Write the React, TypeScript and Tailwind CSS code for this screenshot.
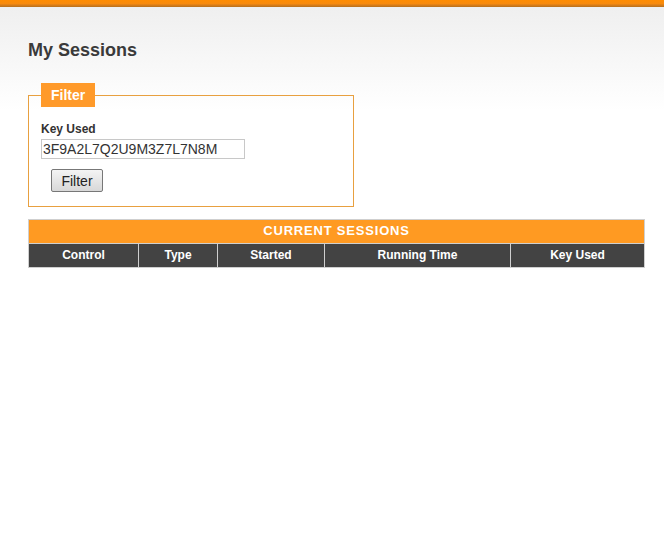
export default function App() {
  const columns = [
    { label: "Control", w: "w-[110px]" },
    { label: "Type", w: "w-[79px]" },
    { label: "Started", w: "w-[107px]" },
    { label: "Running Time", w: "w-[186px]" },
    { label: "Key Used", w: "" },
  ];

  return (
    <div className="min-h-[535px] bg-white font-['Liberation_Sans',Arial,sans-serif] text-[#333]">
      <div className="h-[7px] bg-gradient-to-b from-[#ff8c00] via-[#f88a0c] to-[#b8701c]" />
      <div className="bg-gradient-to-b from-[#efefef] to-white h-[104px] -mb-[104px]" />
      <div className="relative px-[28px] pt-[33px]">
        <h1 className="text-[18px] font-bold leading-[20px] text-[#3a3a3a]">My Sessions</h1>

        <fieldset className="mt-[23px] w-[326px] border border-[#e8a040] px-[12px] pb-[13px] pt-[15px]">
          <legend className="ml-[0px] bg-[#ff9a2a] px-[10px] py-[3px] text-[14px] font-bold leading-[18px] text-white">
            Filter
          </legend>
          <label className="block text-[12px] font-bold leading-[14px] text-[#333]">Key Used</label>
          <input
            defaultValue="3F9A2L7Q2U9M3Z7L7N8M"
            className="mt-[3px] block h-[20px] w-[204px] border border-[#c8c8c8] bg-white px-[1px] text-[14px] leading-[18px] text-[#333] outline-none"
          />
          <button className="ml-[10px] mt-[10px] h-[23px] w-[52px] rounded-[2px] border border-[#777] bg-gradient-to-b from-[#f4f4f4] to-[#d8d8d8] text-[14px] leading-[18px] text-[#222]">
            Filter
          </button>
        </fieldset>

        <table className="mt-[12px] w-[617px] border-collapse border border-[#cfcfcf]">
          <thead>
            <tr>
              <th
                colSpan={5}
                className="h-[24px] bg-[#ff9a22] p-0 text-[13px] font-bold tracking-[0.8px] text-white"
              >
                CURRENT SESSIONS
              </th>
            </tr>
            <tr>
              {columns.map((c) => (
                <th
                  key={c.label}
                  className={`${c.w} h-[24px] border border-[#cfcfcf] bg-[#434343] p-0 text-[12px] font-bold text-white`}
                >
                  {c.label}
                </th>
              ))}
            </tr>
          </thead>
        </table>
      </div>
    </div>
  );
}
